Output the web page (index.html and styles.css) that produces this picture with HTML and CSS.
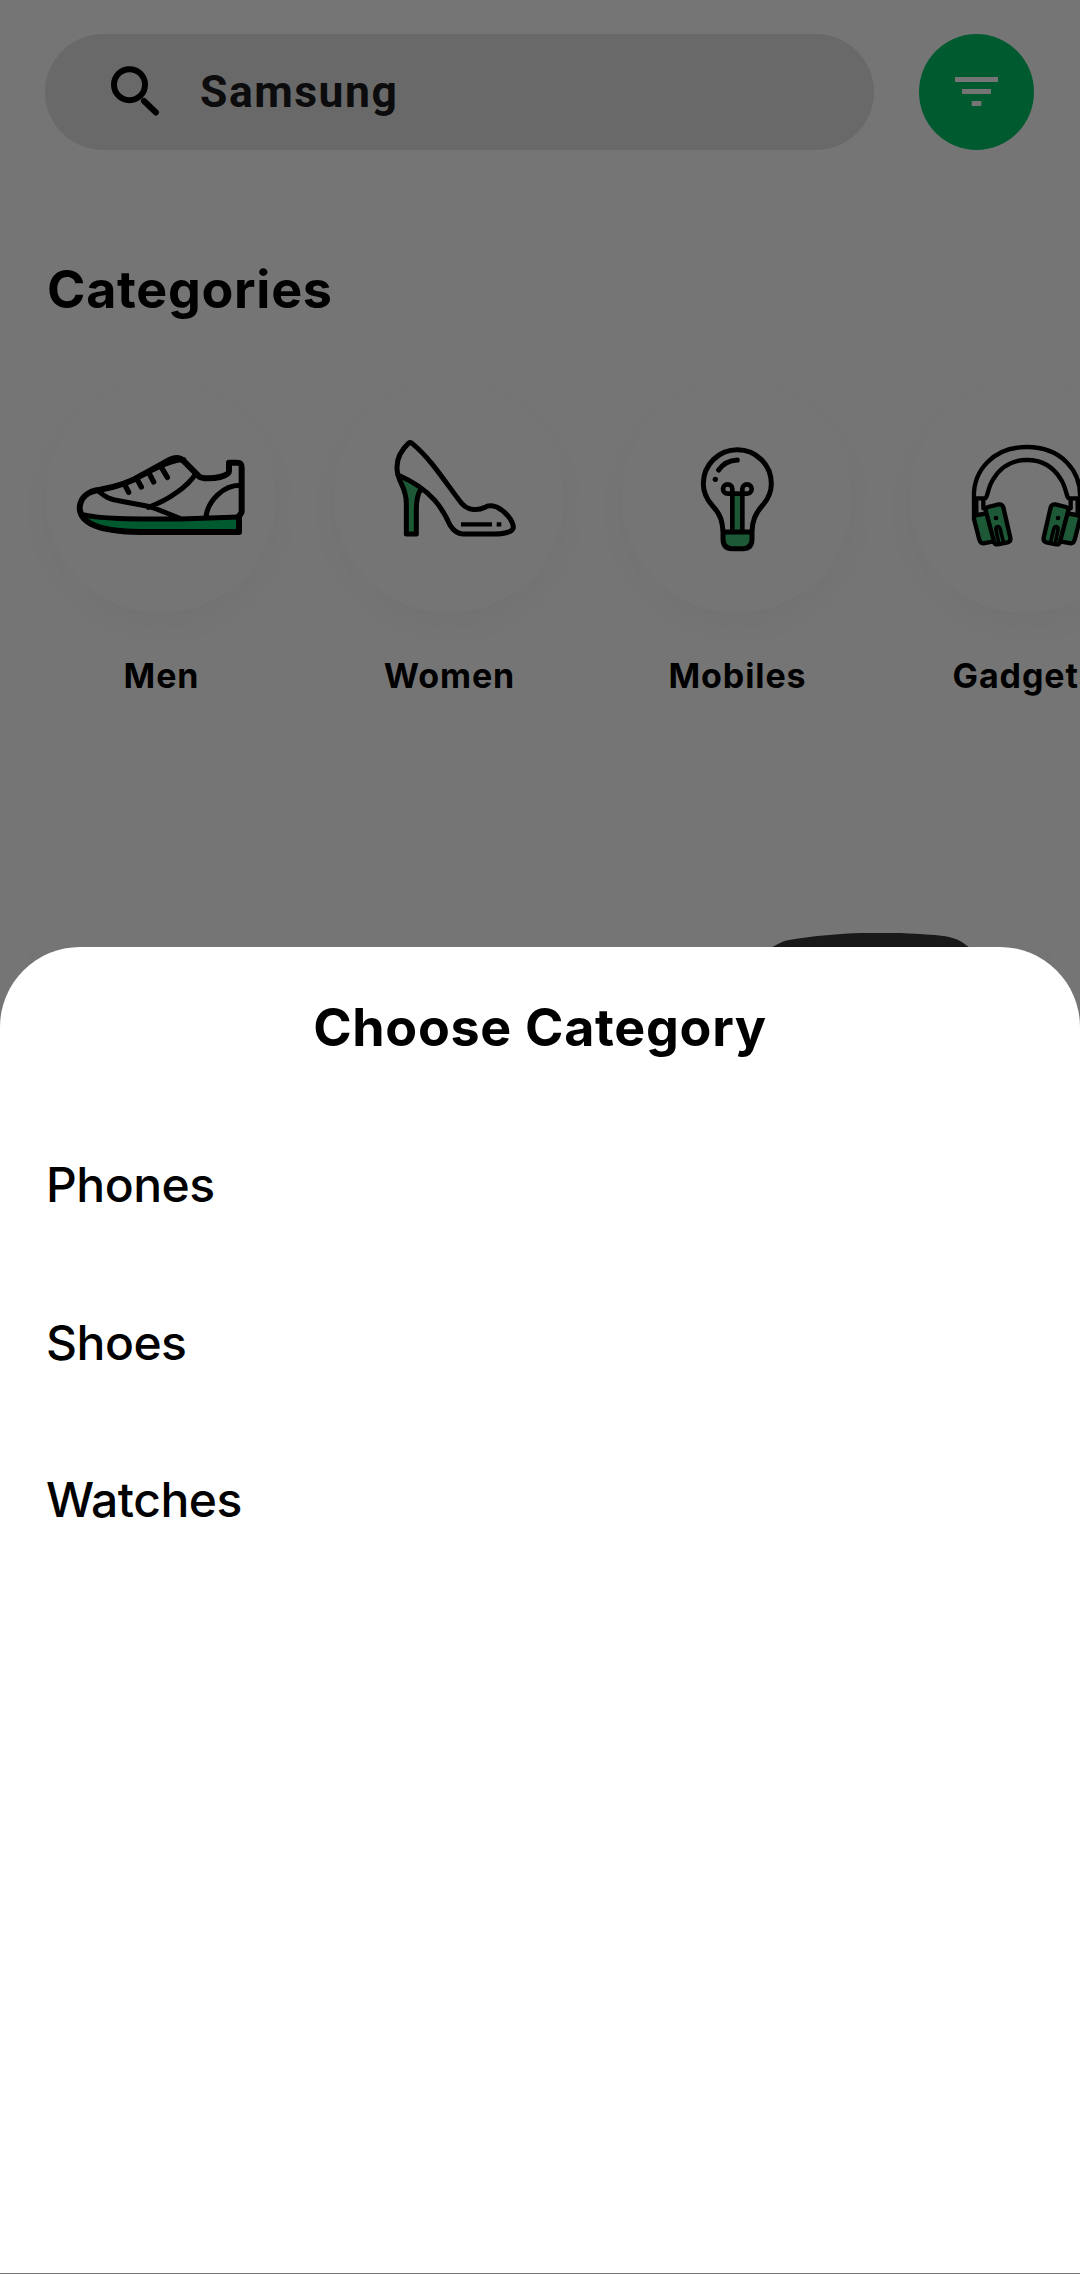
FILE: index.html
```html
<!DOCTYPE html>
<html lang="en">
<head>
<meta charset="utf-8">
<title>Shop</title>
<link rel="stylesheet" href="styles.css">
</head>
<body>
<div class="screen">
  <main class="page">
    <header class="topbar">
      <div class="search">
        <svg class="search-icon" viewBox="0 0 48 50"><circle cx="18.5" cy="18.7" r="15.5"/><path d="M33 35 45 46.5"/></svg>
        <span class="search-text">Samsung</span>
      </div>
      <div class="filter">
        <svg class="filter-icon" viewBox="0 0 43 29"><path d="M0 0H43V5H0zM7 12H36V17H7zM16.700 24H26.300V29H16.700z"/></svg>
      </div>
    </header>
    <h2 class="heading">Categories</h2>
    <div class="categories">
      <div class="category">
        <div class="disc">
          <svg class="icon" viewBox="48 38 690 690">
            <path class="bright" d="M158 433C220 448 390 446 627 444V485H330C240 484 180 468 158 433z"/>
            <g class="line">
              <path stroke-width="18" d="M627 438V485H330C230 484 150 468 149 412C151 380 175 362 210 358C260 350 300 338 340 312L420 268C438 260 450 261 463 274L507 318C515 326 550 325 570 320C590 315 597 308 597 303V277H622C632 277 635 283 635 292V425L627 438"/>
              <path stroke-width="15" d="M158 433C220 448 330 446 450 446L627 440M205 362C225 380 240 388 270 392L350 407C385 414 415 433 450 444M355 411C420 388 475 345 496 312M528 438C535 390 580 345 630 345"/>
              <path stroke-width="16" d="M285 345 296 366M322 328 334 350M357 308 371 335M393 289 412 321"/>
              <path stroke-width="14" d="M375 296C405 280 430 270 462 268"/>
            </g>
          </svg>
        </div>
        <span class="label">Men</span>
      </div>
      <div class="category">
        <div class="disc">
          <svg class="icon" viewBox="42 38 690 690">
            <path class="muted" d="M236 318C260 326 285 340 304 355C292 375 288 395 288 490H260V400C260 370 242 345 236 318z"/>
            <g class="line" stroke-width="15">
              <path d="M234 314C224 275 240 243 265 219Q270 215 276 219C335 266 385 350 425 399C445 422 475 421 495 411C505 403 515 405 530 410C555 422 580 450 580 472C577 487 545 491 520 491H428C410 490 400 480 391 466C370 420 340 360 234 314z"/>
              <path d="M234 314C242 345 259 355 259 400V491H289V420C289 390 293 370 303 357"/>
            </g>
            <path class="line flat" stroke-width="13" d="M423 462H516M530 462H544"/>
          </svg>
        </div>
        <span class="label">Women</span>
      </div>
      <div class="category">
        <div class="disc">
          <svg class="icon" viewBox="36 38 690 690">
            <path class="muted" d="M368 372H397V487H368zM339 487H427V505Q427 534 400 534H366Q339 534 339 505z"/>
            <g class="line" stroke-width="15">
              <path d="M339 485C337 450 330 430 308 407C290 387 280 365 280 340A102 102 0 0 1 484 340C484 365 474 387 456 407C436 430 427 450 426 485V505Q426 535 398 535H367Q339 535 339 505zH426"/>
              <path stroke-width="14" d="M367 485V356A14 14 0 1 0 353 370H410A14 14 0 1 0 397 356V485"/>
              <path stroke-width="15" d="M326 299C338 282 358 270 382 269"/>
            </g>
            <circle cx="316" cy="327" r="8"/>
          </svg>
        </div>
        <span class="label">Mobiles</span>
      </div>
      <div class="category">
        <div class="disc">
          <svg class="icon" viewBox="60 38 690 690">
            <defs>
              <g id="ear-cup">
                <path class="muted" d="M256 436 290 427 306 516 279 521Q272 521 269 513L251 445zM288 411 328 402Q336 402 339 409L362 505Q362 513 354 516L323 522Q315 522 312 514L287 427z"/>
                <g class="line" stroke-width="13">
                  <path d="M286 430 262 434Q250 437 252 446L268 508Q272 520 280 519L307 514M294 410 326 402Q337 401 340 411L361 502Q363 513 353 516L323 522Q314 523 312 514L287 420Q287 412 294 410z"/>
                  <path stroke-width="11" d="M325 512 318 478Q317 469 323 469Q329 469 331 477L339 510"/>
                  <path d="M252 438V384H285C293 384 293 350 310 326C332 290 368 269 411 269M252 384C248 300 310 230 411 230M259 389V430M280 389V414"/>
                </g>
                <circle cx="318" cy="443" r="7"/>
              </g>
            </defs>
            <use href="#ear-cup"/>
            <use href="#ear-cup" transform="matrix(-1 0 0 1 822 0)"/>
          </svg>
        </div>
        <span class="label">Gadgets</span>
      </div>
    </div>
    <div class="products">
      <div class="product"></div>
      <div class="product">
        <svg class="product-photo" viewBox="0 0 200 80"><path d="M0 15C6 11 12 8 18 7C60 0 100-1 130 0C150 1 170 2 178 4C188 6 194 11 199 15V80H0z"/></svg>
      </div>
    </div>
  </main>
  <div class="scrim"></div>
  <section class="sheet">
    <h2 class="sheet-title">Choose Category</h2>
    <ul class="options">
      <li class="option">Phones</li>
      <li class="option">Shoes</li>
      <li class="option">Watches</li>
    </ul>
  </section>
</div>
</body>
</html>
```

FILE: styles.css
```css
* { box-sizing: border-box; }
body { margin: 0; font-family: Inter, sans-serif; color: #000; }
.screen { position: relative; width: 1080px; height: 2274px; overflow: hidden; background: #fff; }
.page { height: 100%; overflow: hidden; padding-top: 34px; }

.topbar { display: flex; justify-content: space-between; padding: 0 46px 0 45px; }
.search { display: flex; align-items: center; width: 829px; height: 116px; padding-left: 66px; border-radius: 58px; background: #e5e5e5; }
.search-icon { width: 48px; height: 50px; margin-top: -3px; fill: none; stroke: #000; stroke-width: 6; stroke-linecap: round; }
.search-text { margin-left: 41px; font: 700 44.5px/50px Roboto, sans-serif; letter-spacing: 1.5px; color: #1c1c20; }
.filter { display: flex; align-items: center; justify-content: center; width: 115px; height: 116px; border-radius: 50%; background: #00c569; }
.filter-icon { width: 43px; height: 29px; margin-top: -1px; fill: #fff; }

.heading { margin: 108px 0 0 47px; font-size: 52px; line-height: 64px; font-weight: 700; letter-spacing: .7px; }
.categories { display: flex; gap: 58px; margin-top: 61px; padding-left: 46px; height: 390px; overflow: hidden; }
.category { display: flex; flex: none; flex-direction: column; align-items: center; width: 230px; }
.disc { width: 230px; height: 230px; border-radius: 50%; background: #fff; box-shadow: 0 12px 50px rgba(0, 0, 0, .04); }
.icon { display: block; width: 230px; height: 230px; }
.line { fill: none; stroke: #000; stroke-linecap: round; stroke-linejoin: round; }
.flat { stroke-linecap: butt; }
.bright { fill: #00c569; }
.muted { fill: #3fc276; }
.label { margin-top: 42px; padding-left: 1px; font-size: 34px; line-height: 42px; font-weight: 700; letter-spacing: .9px; }

.products { display: flex; gap: 58px; margin-top: 157px; padding: 0 34px; }
.product { flex: 1; height: 600px; border-radius: 20px; background: #fff; box-shadow: 0 12px 20px rgba(0, 0, 0, .05); }
.product-photo { display: block; width: 200px; height: 80px; margin: 3px auto 0 202px; fill: #383838; }

.scrim { position: absolute; inset: 0; background: rgba(0, 0, 0, .54); }
.sheet { position: absolute; left: 0; right: 0; top: 947px; bottom: 1px; padding-top: 49px; border-radius: 80px 80px 0 0; background: #fff; }
.sheet-title { margin: 0; font-size: 52px; line-height: 64px; font-weight: 700; letter-spacing: .7px; text-align: center; }
.options { margin: 0; padding: 46px; list-style: none; }
.option { height: 157.5px; font-size: 48px; line-height: 157.5px; font-weight: 500; letter-spacing: -.5px; }
```
